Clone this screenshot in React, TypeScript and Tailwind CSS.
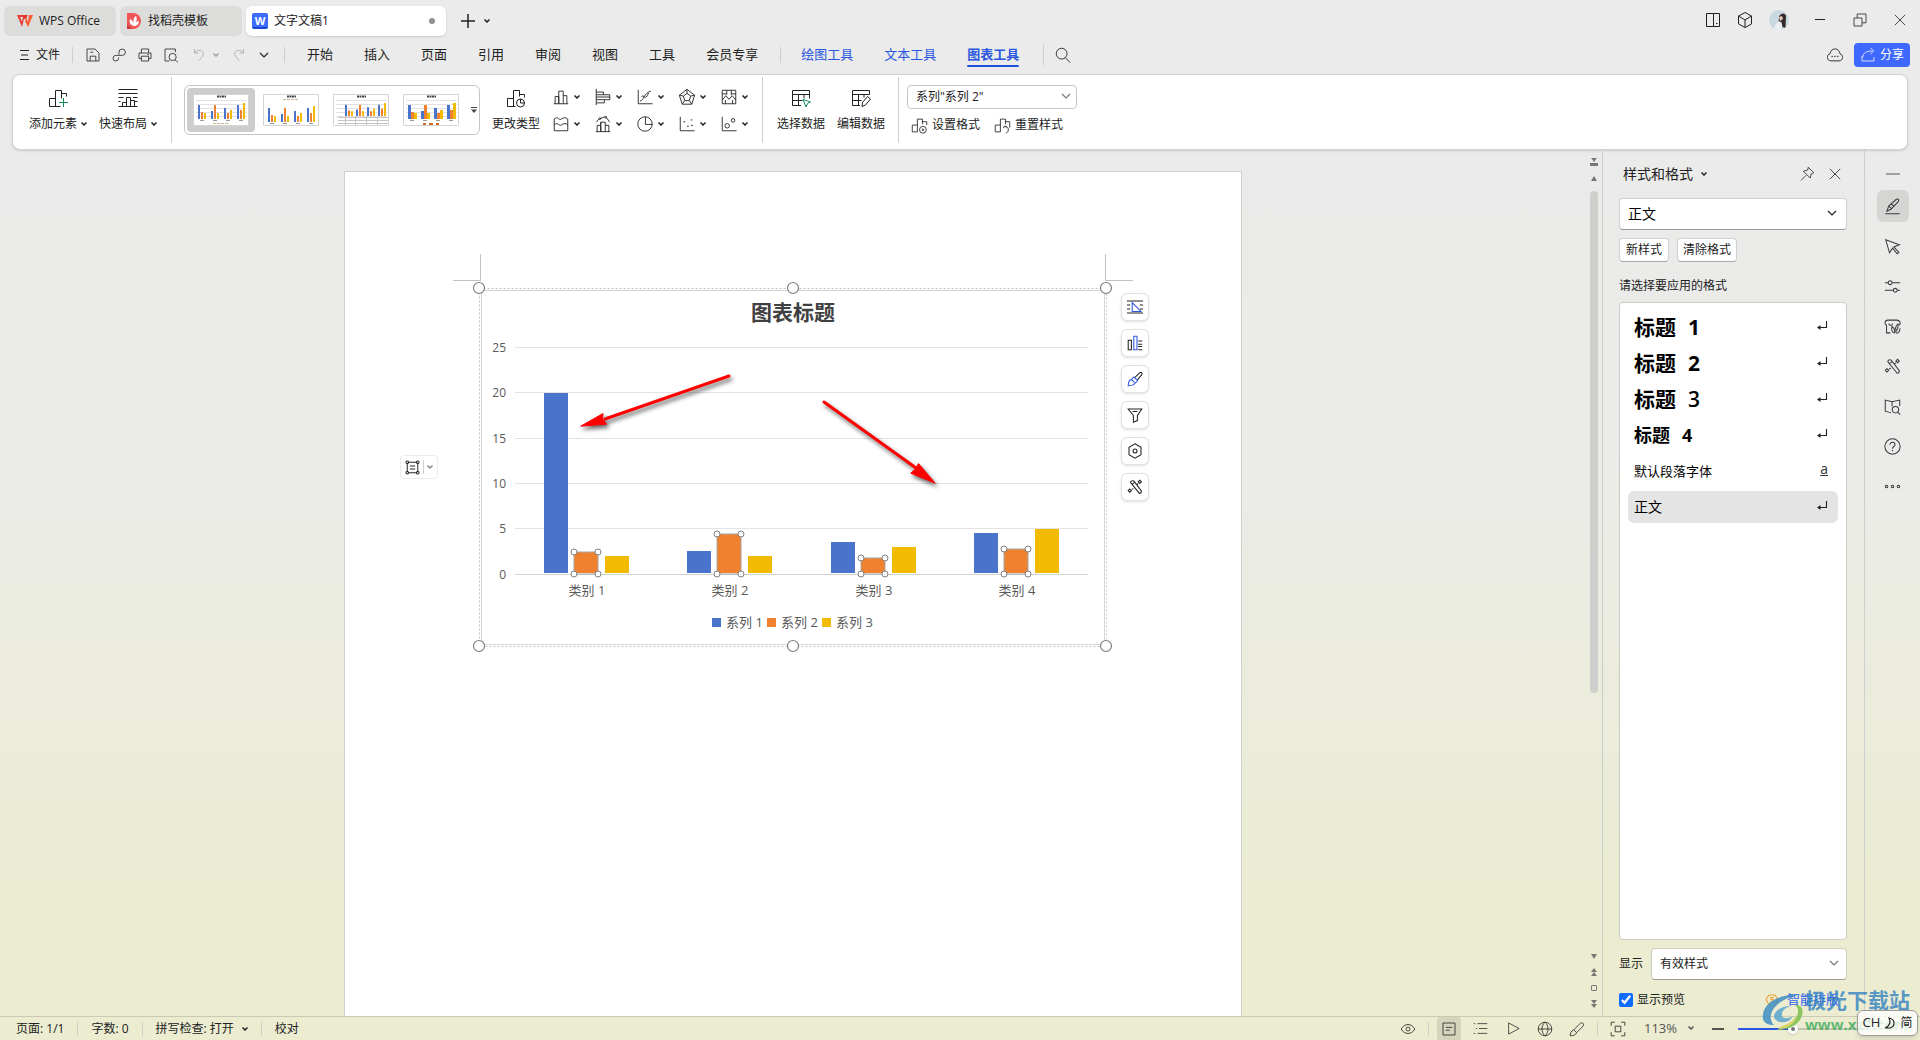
import React, {useState} from "react";

type IconProps = {
 d: string;
 className?: string;
 accent?: string;
 accentClass?: string;
};

// line icon on a 20 x 20 grid, with an optional second colour
const Icon: React.FC<IconProps> = ({d, className = "size-5", accent, accentClass = "stroke-[#2b57e0]"}) => (
 <svg viewBox="0 0 20 20" fill="none" className={`shrink-0 stroke-current ${className}`} aria-hidden="true">
  <path d={d} />
  {accent && <path d={accent} className={accentClass} />}
 </svg>
);

const Caret: React.FC<{className?: string}> = ({className = ""}) => (
 <svg viewBox="0 0 6 4" fill="none" className={`h-1 w-1.5 shrink-0 stroke-current ${className}`} aria-hidden="true">
  <path d="M.5.5 3 3 5.5.5" strokeWidth="1.5" />
 </svg>
);

const Chevron: React.FC<{className?: string}> = ({className = ""}) => (
 <svg viewBox="0 0 10 6" fill="none" className={`h-1.5 w-2.5 shrink-0 stroke-current ${className}`} aria-hidden="true">
  <path d="M1 1l4 4 4-4" strokeWidth="1.2" />
 </svg>
);

const Divider: React.FC<{className?: string}> = ({className = ""}) => (
 <span className={`w-px shrink-0 bg-[#cfcfcd] ${className}`} />
);

const paths = {
 save: "M2.5 17.5v-15h10l5 5v10h-15zM6.5 17.5v-6h7v6M6.5 6.500h4",
 link: "M10 9.500V6.500a4 4 0 1 1 4 4H6a3.500 3.500 0 1 0 3.500 3.500V13",
 print: "M5.5 7.5v-5h9v5M5.5 14.5h-3v-7h15v7h-3M5.5 11.5h9v6h-9zM13 9.5h2",
 preview: "M8 17.5H2.5v-15h13v4M12 8a4.5 4.5 0 1 0 0 9 4.5 4.5 0 1 0 0-9zM15 16l3.500 3",
 undo: "M4.5 2.5v5h5M4.5 7.5C7 4 12 3 14.500 6s0 6-5 11",
 redo: "M15.5 2.5v5h-5M15.5 7.5C13 4 8 3 5.500 6s0 6 5 11",
 search: "M8.5 2.5a6 6 0 1 0 0 12 6 6 0 1 0 0-12zM12.5 13l5.5 5.5",
 addChart: "M1.5 18.5h11M1.5 18.5v-8h6M7.5 18.5v-16h6v8M13.5 5.5h5v3",
 layout: "M.5 1.5h19M.5 5.5h19M.5 9.5h5M15 9.5h4.5M.5 13.5h2M17 13.5h2.5M.5 18.5h19M4.5 18.5v-4h4v4M8.5 18.5v-9h4v9M12.5 12.5h4v6",
 changeType: "M1.5 18.5v-8h6M1.5 18.5h8M7.5 18.5v-16h6v6M13.5 6.5h5v3M14.5 11a4 4 0 1 0 0 8 4 4 0 1 0 0-8zM14.5 11v4h4",
 column: "M2 17.5h16M3.5 17.5v-8h4v8M7.5 17.5v-14h5v14M12.5 8.5h4v9",
 bar: "M2.5 1v18M2.5 4.5h8v3h-8M10.5 7.5h7v2.500h-15M2.5 13h15v-3M2.5 16.5h9v-3",
 line: "M2.5 2v15.5h16M4.5 14.5c4 0 4-9 12-11M6 9.5c3-3 4 6 8-4",
 radar: "M10 1.5l8.5 6.5-3.2 10H4.7L1.5 8zM10 6l4 3-1.5 5h-5L6 9zM10 1.5V6M18.5 8 14 9M15.3 18l-2.8-4M4.7 18l2.8-4M1.5 8 6 9",
 stock: "M2.5 2.5h15v15h-15zM2.5 13.5l4-5 3.5 4 3.5-4 4 5M7.5 2.5v5M12.5 2.5v5M6 17.5v-4M14 17.5v-4M2.5 6.5h5M12.5 6.5h5",
 area: "M2.5 17.5v-13c4-4 5 2 8 0s5-2 7 0v13zM2.5 11c4-4 5 2 8 0s5-2 7 0",
 combo: "M3.5 18.5v-7h4v7M7.5 11v-3h5v10.5M7.5 8v10.5M12.5 11.5h4v7M2 18.5h16M2.5 8l3-3.5M7 4l5-2M14 3l3.5 5M5.5 4a1 1 0 1 0 2 0 1 1 0 1 0-2 0M12 2.5a1 1 0 1 0 2 0 1 1 0 1 0-2 0",
 pie: "M10 2a8 8 0 1 0 0 16 8 8 0 1 0 0-16zM10.5 2v8.5H18",
 scatter: "M2.5 2v15.5h16M6 7.5h2M10 12.5h2M14 5.5h2M14.5 11.5h2",
 bubble: "M2.5 2v15.5h16M8 9.5a2.5 2.5 0 1 0 0 5 2.5 2.5 0 1 0 0-5zM14.5 4a2 2 0 1 0 0 4 2 2 0 1 0 0-4z",
 selectData: "M10 17.5H1.5v-15h17v8M1.5 6.5h17M1.5 12.5h10M7.5 6.5v11M13 6.5v4",
 editData: "M9 17.5H1.5v-15h17v4M1.5 6.5h17M1.5 12.5h9M7.5 6.5v11M13 6.5v3M11 18.5l.5-4 5-6 3 2.5-5 6z",
 formatSet: "M1.5 17.5v-8h6M1.5 17.5h6M7.5 17.5v-15h6v6M13.5 5.5h5v4M14 11a4 4 0 1 0 0 8 4 4 0 1 0 0-8zM14 14a1 1 0 1 0 0 2 1 1 0 1 0 0-2z",
 styleReset: "M1.5 17.5v-8h6M1.5 17.5h6v-15h6v6M13.5 5.5h5v7M11 13l1.5-2.5 2 2M12 11c5-1 7 6 2 8",
 panels: "M3.5 3.5h13v13h-13zM10.5 3.5v13M13 13.5h1.5",
 cube: "M10 2.5l6.5 3.5v8L10 17.5 3.5 14V6zM3.5 6 10 10l6.5-4M10 10v7.5",
 cloud: "M5.500 16.500h9c5 0 5-7 1-8C14.500 1.500 5.500 1.500 4.500 8.500c-4 1-4 8 1 8zM6 11.500h1.800M9.100 11.500h1.800M12.200 11.500H14",
 share: "M2.5 11v6.500h15v-5M3.5 13c0-5 4-8 12-8M13 1l4 4-4 4",
 pin: "M11.5 1.5l7 7-1.5 1-1.500 0-1.500 5.500-8.500-8.500 5.500-1.500zM9 11.500l-6.500 6.500",
 close: "M3.5 3.5l13 13M16.5 3.5l-13 13",
 restore: "M2.5 7.5h10v10h-10zM6.5 7.5v-5h11v11h-5",
 pen: "M1.5 18.5h17M3.5 15.5l2-6 9-8c2-1 4 0 2 3l-8 8.5zM5.5 9.5l3.500 3M8.500 7l3.500 3",
 cursor: "M2 2l16 6-6.500 2.500 6 6.500-2 1.5-5.500-6.500-3.500 5.500z",
 sliders: "M1 5.500h4M9.500 5.500h9.500M7.200 3.200a2.300 2.300 0 1 0 0 4.600 2.300 2.300 0 1 0 0-4.600zM1 14.500h10M15.500 14.500h3.500M13.300 12.200a2.300 2.300 0 1 0 0 4.600 2.300 2.300 0 1 0 0-4.600z",
 gallery: "M7.5 17.5H3v-9C0 7 1 2.5 4.5 2.5H15c4 0 5 4 3 6M5.500 6.500c1 3 4.500 3 4.500 0M9.5 10c-1 4 0 7 2.500 7.500 1-3 0-6-2.500-7.500zM12.500 16c1-5 2-8 4-9 1 3-1 7-3 10M14 18c2.500 0 4.500-2 5-6",
 tools: "M4.500 4.500c0-2 2-3 4-2L18 15c0 2-1 3-2.500 3zM6 7l4-3M16 1.500l2 2-2 2-2-2zM12.500 7l1.500-1.500M3.500 12.500l2 2-2 2-2-2zM6 13l2-1",
 bookSearch: "M8.500 17.500l-7-2v-13l8 2 9-2v7M9.500 4.500v5.500M13.5 10a3.800 3.800 0 1 0 0 7.600 3.800 3.800 0 1 0 0-7.600zM16 16.500l3 3",
 help: "M10 1a9 9 0 1 0 0 18 9 9 0 1 0 0-18zM7 8c0-4 6-4 6 0 0 2-3 2-3 4.500M10 14v1.500",
 dots: "M3 8.500a1.5 1.5 0 1 0 0 3 1.5 1.5 0 1 0 0-3zM10 8.500a1.5 1.5 0 1 0 0 3 1.5 1.5 0 1 0 0-3zM17 8.500a1.5 1.5 0 1 0 0 3 1.5 1.5 0 1 0 0-3z",
 eye: "M1.500 10c4-7.500 13-7.500 17 0-4 7.500-13 7.500-17 0zM10 7.500a2.5 2.5 0 1 0 0 5 2.5 2.5 0 1 0 0-5z",
 pageView: "M2.500 2.500h15v15h-15zM6 8h8M6 11.5h5",
 outline: "M6 3.500h13M8 10h11M6 16.500h13M1 3.500h2M4 10h1.500M1 16.500h2",
 play: "M3.5 2.500l14 7.500-14 7.500z",
 globe: "M10 1.5a8.5 8.5 0 1 0 0 17 8.5 8.5 0 1 0 0-17zM1.5 10h17M10 1.5c-5 4-5 13 0 17M10 1.5c5 4 5 13 0 17",
 brush: "M1.500 18.500c0-3 1-6 4-7l8.500-8.500c2-2 5 0 4 3l-8.500 8.500c-1 3-4 4-8 4zM6 11l3.5 3.5",
 fit: "M1.5 6v-4.500h4.500M14 1.5h4.500V6M18.5 14v4.500H14M6 18.5H1.500V14M6.5 6.5h7v7h-7z",
 funnel: "M1.500 2.500h17l-5.500 8v6.5l-5 2v-8.500zM7 5.5h6",
 hex: "M10 1l7.500 4.500v9L10 19l-7.500-4.500v-9zM10 7.5a2.5 2.5 0 1 0 0 5 2.5 2.5 0 1 0 0-5z",
};

const menuTabs = ["开始", "插入", "页面", "引用", "审阅", "视图", "工具", "会员专享"];
const chartTypes: [string, string][] = [
 ["柱形图", paths.column],
 ["条形图", paths.bar],
 ["折线图", paths.line],
 ["雷达图", paths.radar],
 ["股价图", paths.stock],
 ["面积图", paths.area],
 ["组合图", paths.combo],
 ["饼图", paths.pie],
 ["散点图", paths.scatter],
 ["气泡图", paths.bubble],
];

const TitleBar = () => (
 <header className="flex h-10 items-center">
  <div className="flex flex-1 items-center gap-1 pt-0.5 pl-1 text-xs">
   <button className="flex h-[30px] w-28 items-center gap-1.5 rounded-md bg-[#dcdcdb] pl-[13px]">
    <svg viewBox="0 0 16 12" className="h-3 w-4">
     <path d="M0 0h11L9 4H7L5 12 0 0zm3 2 2 5 1-5z" fill="#e8382f" fillRule="evenodd" />
     <path d="M12 0h4l-5 12-3-6 1.5-3L11 7z" fill="#ff5a2e" />
    </svg>
    WPS Office
   </button>
   <button className="flex h-[30px] w-[122px] items-center gap-1.5 rounded-md bg-[#dcdcdb] pl-1.5">
    <svg viewBox="0 0 16 16" className="size-4">
     <path d="M1 0h6a8 8 0 0 1 0 16H1z" fill="#f25555" />
     <path d="M1 11l5 5H1z" fill="#c93a3a" />
     <path d="M8 13C4 12 3 9 4 6c2 1 3 2 3.5 4C7 7 8 4 10 3c1 2 1 4 0 6l3-1c0 3-2 5-5 5z" fill="#fff" />
    </svg>
    找稻壳模板
   </button>
   <button className="flex h-[30px] w-[200px] items-center gap-1.5 rounded-md bg-white pr-[11px] pl-1.5 shadow-sm">
    <span className="flex size-4 items-center justify-center rounded-xs border-b-2 border-[#1b49d6] bg-[#3c6bff] text-[11px] leading-none font-bold text-white">
     W
    </span>
    <span className="flex-1 text-left">文字文稿1</span>
    <span className="size-1.5 rounded-full bg-[#8f8f8f]" />
   </button>
   <button aria-label="新建" className="ml-2 flex">
    <Icon d="M10 3v14M3 10h14" className="size-5 stroke-[1.5]" />
   </button>
   <button aria-label="标签列表" className="ml-0.5 flex">
    <Caret />
   </button>
  </div>
  <div className="flex items-center pr-3">
   <button aria-label="侧栏" className="mr-3 flex">
    <Icon d={paths.panels} />
   </button>
   <button aria-label="应用" className="mr-3.5 flex">
    <Icon d={paths.cube} />
   </button>
   <svg viewBox="0 0 20 20" className="size-5 rounded-full" role="img" aria-label="头像">
    <path d="M0 0h20v20H0z" fill="#c9d9e0" />
    <path d="M10 7c1-4 6-5 7-1l-.5 12-3-1-1-5-3 1z" fill="#33272c" />
    <path d="M10 7l3-1 1 3-3 2z" fill="#e8c8b8" />
    <path d="M5 20c0-5 3-8 6-9l2 5-1 4z" fill="#e8f0f2" />
   </svg>
   <button aria-label="最小化" className="ml-[21px] flex">
    <Icon d="M5 9.5h10" />
   </button>
   <button aria-label="还原" className="ml-[22px] flex">
    <Icon d={paths.restore} className="size-4" />
   </button>
   <button aria-label="关闭" className="ml-6 flex">
    <Icon d={paths.close} className="size-4" />
   </button>
  </div>
 </header>
);

const MenuBar = () => (
 <nav className="flex h-[34px] items-center pb-1 text-[13px]">
  <button className="flex items-center gap-1.5 pl-5 text-xs">
   <svg viewBox="0 0 10 12" fill="none" className="h-3 w-2.5 stroke-current">
    <path d="M0 1.5h9M1 6h7M0 10.5h9" />
   </svg>
   文件
  </button>
  <Divider className="mr-3 ml-3 h-4" />
  <div className="flex items-center gap-2.5">
   <button aria-label="保存" className="flex"><Icon d={paths.save} className="size-4" /></button>
   <button aria-label="输出" className="flex"><Icon d={paths.link} className="size-4" /></button>
   <button aria-label="打印" className="flex"><Icon d={paths.print} className="size-4" /></button>
   <button aria-label="打印预览" className="flex"><Icon d={paths.preview} className="size-4" /></button>
   <button aria-label="撤销" className="ml-0.5 flex items-center gap-1.5 text-[#a5a5a5]">
    <Icon d={paths.undo} className="size-4" />
    <Caret />
   </button>
   <button aria-label="恢复" className="ml-0.5 flex text-[#a5a5a5]"><Icon d={paths.redo} className="size-4" /></button>
   <button aria-label="更多" className="ml-0.5 flex"><Chevron /></button>
  </div>
  <Divider className="mr-[22px] ml-[15px] h-4" />
  <div className="flex items-center gap-[31px]">
   {menuTabs.map((t) => (
    <button key={t}>{t}</button>
   ))}
  </div>
  <Divider className="mr-5 ml-[22px] h-4" />
  <div className="flex items-center gap-[31px] text-[#2b57e0]">
   <button>绘图工具</button>
   <button>文本工具</button>
   <button className="relative font-bold">
    图表工具
    <span className="absolute inset-x-0 -bottom-0.5 h-0.5 rounded bg-[#1e50e0]" />
   </button>
  </div>
  <Divider className="mr-2.5 ml-6 h-5" />
  <button aria-label="搜索" className="flex">
   <Icon d={paths.search} className="size-[18px]" />
  </button>
  <div className="ml-auto flex items-center gap-2.5 pr-2.5 text-xs">
   <button aria-label="云同步" className="flex"><Icon d={paths.cloud} className="size-[18px]" /></button>
   <button className="flex h-6 w-14 items-center justify-center gap-1 rounded bg-[#3f68ff] text-white">
    <Icon d={paths.share} className="size-4" />
    分享
   </button>
  </div>
 </nav>
);

const BigButton: React.FC<{label: string; d: string; accent?: string; caret?: boolean; wide?: boolean}> = ({label, d, accent, caret, wide}) => (
 <button className={`flex flex-col items-center gap-2 leading-4 ${wide ? "w-[70px]" : "w-[60px]"}`}>
  <Icon d={d} accent={accent} accentClass="stroke-[#128a55]" />
  <span className="flex items-center gap-1 whitespace-nowrap">
   {label}
   {caret && <Caret />}
  </span>
 </button>
);

const thumbBars = [
 [14, 7, 6],
 [8, 14, 6],
 [11, 6, 9],
 [14, 9, 16],
];
const thumbColors = ["#4a74cb", "#ef812f", "#f2ba02"];

const Thumb: React.FC<{kind: number}> = ({kind}) => {
 const base = kind === 1 ? 28 : kind === 2 ? 22 : 25;
 const left = kind === 2 ? 12 : 5;
 const pitch = kind === 2 ? 11 : 13;
 return (
  <svg viewBox="0 0 56 32" className="h-8 w-14" aria-hidden="true">
   <path d="M.5.5h55v31H.5z" fill="#fff" stroke="#d4d4d4" />
   <path d="M24 2.5h9" stroke="#444" strokeWidth="2" strokeDasharray="2 .5" />
   {kind !== 1 && <path d="M3 6.5h51M3 10.5h51M3 14.5h51M3 18.5h51M3 22.5h51" stroke="#e2e2e2" />}
   {kind === 1 && <path d="M20 5.5h16" stroke="#c9b98a" strokeDasharray="3 1" />}
   {kind === 2 && <path d="M5 23.5h50M5 26.5h50M5 29.5h50M12.5 22v9M22.5 22v9M33.5 22v9M44.5 22v9" stroke="#c4c4c4" />}
   {thumbBars.map((group, g) =>
    group.map((v, s) => (
     <rect
      key={`${g}-${s}`}
      x={left + g * pitch + s * 3}
      y={base - v * (kind === 2 ? 0.8 : 1)}
      width={kind === 3 ? 3 : 2}
      height={v * (kind === 2 ? 0.8 : 1)}
      fill={thumbColors[s]}
     />
    ))
   )}
   {kind !== 2 && <path d={`M4 ${base + 1}.5h48`} stroke="#999" strokeDasharray="4 9" strokeDashoffset="-3" />}
   {kind === 0 && <path d="M20 29.5h16" stroke="#c9b98a" strokeDasharray="3 1" />}
   {kind === 3 && <path d="M20 30h3M26 30h4M33 30h3" stroke="#d06a20" strokeWidth="2" />}
  </svg>
 );
};

const Ribbon = () => {
 const [thumb, setThumb] = useState(0);
 return (
  <section className="mx-3 flex h-[76px] items-center rounded-lg border border-[#d2d2d1] bg-white pb-1 text-xs shadow-sm">
   <div className="flex pl-2.5">
    <BigButton label="添加元素" d={paths.addChart} accent="M15.5 10v9M11 14.5h9" caret wide />
    <BigButton label="快速布局" d={paths.layout} caret wide />
   </div>
   <Divider className="mr-3 ml-2 h-[66px]" />
   <div className="flex items-center gap-0.5 rounded-md border border-[#c6c6c6] p-0.5">
    {[0, 1, 2, 3].map((k) => (
     <button
      key={k}
      aria-label={`图表样式 ${k + 1}`}
      onClick={() => setThumb(k)}
      className={`flex h-11 w-[68px] items-center justify-center rounded ${thumb === k ? "bg-[#cdcdcd]" : ""}`}
     >
      <Thumb kind={k} />
     </button>
    ))}
    <button aria-label="更多样式" className="flex w-2.5 justify-end">
     <svg viewBox="0 0 6 6" className="size-1.5 fill-[#444]">
      <path d="M0 0h6v1H0zM0 2.5h6L3 6z" />
     </svg>
    </button>
   </div>
   <div className="ml-1.5 flex">
    <BigButton label="更改类型" d={paths.changeType} />
   </div>
   <div className="ml-1.5 grid w-[210px] grid-cols-5">
    {chartTypes.map(([name, d]) => (
     <button key={name} aria-label={name} className="flex h-[27px] items-center gap-1">
      <Icon d={d} className="size-[18px]" />
      <Caret />
     </button>
    ))}
   </div>
   <Divider className="mr-2 h-[66px]" />
   <BigButton label="选择数据" d={paths.selectData} accent="M12 11.5l7.5 2.5-3 1.5-1.5 3.5z" />
   <BigButton label="编辑数据" d={paths.editData} />
   <Divider className="mr-2 ml-[7px] h-[66px]" />
   <div className="flex flex-col gap-2 pb-0.5">
    <div className="relative flex h-6 w-[170px]">
     <select aria-label="图表元素" className="w-full appearance-none rounded border border-[#c6c6c6] bg-white pl-2 leading-4">
      <option>系列"系列 2"</option>
      <option>系列"系列 1"</option>
      <option>系列"系列 3"</option>
     </select>
     <Chevron className="pointer-events-none absolute top-2 right-1.5 text-[#777]" />
    </div>
    <div className="flex gap-3.5 pl-1 leading-4">
     <button className="flex items-center gap-1">
      <Icon d={paths.formatSet} className="size-[17px]" />
      设置格式
     </button>
     <button className="flex items-center gap-1">
      <Icon d={paths.styleReset} className="size-[17px]" />
      重置样式
     </button>
    </div>
   </div>
  </section>
 );
};

const categories = [
 {name: "类别 1", values: [20, 2.4, 2]},
 {name: "类别 2", values: [2.5, 4.4, 2]},
 {name: "类别 3", values: [3.5, 1.8, 3]},
 {name: "类别 4", values: [4.5, 2.8, 5]},
];
const legend = ["系列 1", "系列 2", "系列 3"];
const ticks = [0, 5, 10, 15, 20, 25];
const barX = [72, 102, 133];

const DocChart = () => {
 const floor = 293;
 const unit = 9.06;
 return (
  <svg viewBox="0 0 641 372" className="h-[372px] w-[641px] overflow-visible fill-[#595959] text-[13px]" role="img" aria-label="图表标题">
   <path d="M9.5 9.5h623v354h-623z" fill="none" stroke="#d5d5d5" />
   <path d="M7.5 7.5h627v358h-627z" fill="none" stroke="#c2c2c2" strokeDasharray="2 2" />
   <text x="321" y="39" textAnchor="middle" className="fill-[#404040] text-[21px] font-bold">
    图表标题
   </text>
   {ticks.map((t) => {
    const y = Math.floor(floor - t * unit) + 0.5;
    return (
     <g key={t}>
      <path d={`M43 ${y}h573`} stroke={t ? "#e3e3e3" : "#d3d3d3"} />
      <text x="34" y={y + 4.5} textAnchor="end" className="text-xs">
       {t}
      </text>
     </g>
    );
   })}
   {categories.map((c, i) => {
    const shift = Math.round(i * 143.4);
    return (
     <g key={c.name}>
      {c.values.map((v, s) => {
       const h = Math.round(v * unit) - 1;
       return <rect key={s} x={barX[s] + shift} y={292 - h} width="24" height={h} fill={thumbColors[s]} />;
      })}
      <text x={115 + shift} y="314" textAnchor="middle">
       {c.name}
      </text>
     </g>
    );
   })}
   {/* handles of the selected series */}
   {categories.map((c, i) => {
    const x = 102 + Math.round(i * 143.4);
    const top = 293 - Math.round(c.values[1] * unit);
    return (
     <g key={c.name} fill="#fff" stroke="#808080">
      <path d={`M${x} ${top}h24V293h-24z`} fill="none" stroke="#a6a6a6" />
      {[x, x + 24].map((cx) => [top, 293].map((cy) => <circle key={`${cx}-${cy}`} cx={cx} cy={cy} r="3" />))}
     </g>
    );
   })}
   {legend.map((name, i) => (
    <g key={name}>
     <rect x={240 + i * 55} y="337" width="9" height="9" fill={thumbColors[i]} />
     <text x={254 + i * 55} y="346">
      {name}
     </text>
    </g>
   ))}
   {[7, 321, 634].map((x) =>
    [7, 365].map((y) => <circle key={`${x}-${y}`} cx={x} cy={y} r="5.5" fill="#fff" stroke="#7f7f7f" strokeWidth="1.2" />)
   )}
   <g fill="#fe0000" stroke="#fe0000" strokeLinecap="round" className="drop-shadow-[2px_3px_2px_rgba(0,0,0,0.6)]">
    <path d="M257 95 133 138" strokeWidth="3" />
    <path d="M109 145l22-12.5-.5 5.5 4 5z" strokeWidth="1" />
    <path d="M352 121l92 66" strokeWidth="3" />
    <path d="M463 202l-16.500-19.500-3 5.500-4.500 4z" strokeWidth="1" />
   </g>
  </svg>
 );
};

const chartTools: {name: string; d: string; accent?: string}[] = [
 {name: "布局选项", d: "M0 2.5h20M0 7.5h4M16 7.5h4M0 12.5h4M16 12.5h4M0 17.5h20", accent: "M6.5 4.5v11h11z"},
 {name: "图表元素", d: "M1.5 6.5h4v12h-4zM14 7.5h5M14 11.5h5M14 14.5h5M14 18.5h5", accent: "M8.5 1.5h4v17h-4z"},
 {name: "图表样式", d: "M10 8l6-6c2-1 3.500 1 2.500 2.500L13 11", accent: "M1.5 18.5c0-4 1-7 4-8l3-3 5 4.5-3 3c-2 3-5 3.500-9 3.500zM5.5 10.5l4 4"},
 {name: "图表筛选器", d: paths.funnel},
 {name: "设置图表区域格式", d: paths.hex},
 {name: "快捷工具", d: paths.tools},
];

const Page = () => (
 <article className="relative w-[898px] shrink-0 border border-b-0 border-[#cfcfcb] bg-white px-[108px] pt-[82px]">
  <div className="flex justify-between">
   <span className="h-[27px] w-7 border-r border-b border-[#c2c2c2]" />
   <span className="h-[27px] w-7 border-b border-l border-[#c2c2c2]" />
  </div>
  <div className="pl-[19px]">
   <DocChart />
  </div>
  <div className="absolute top-[121px] left-[776px] flex flex-col gap-2">
   {chartTools.map((t) => (
    <button key={t.name} aria-label={t.name} className="flex size-7 items-center justify-center rounded-md border border-[#e2e2e2] bg-white shadow">
     <Icon d={t.d} accent={t.accent} className="size-4 stroke-[1.3]" />
    </button>
   ))}
  </div>
  <button aria-label="段落布局" className="absolute top-[283px] left-[55px] flex h-6 w-[38px] items-center justify-between rounded border border-[#ececec] bg-white px-1">
   <Icon d="M4 3h12M4 17h12M3 4v12M17 4v12M6.5 8h7M6.5 12h7M1.5 1.5h3v3h-3zM15.5 1.5h3v3h-3zM1.5 15.5h3v3h-3zM15.5 15.5h3v3h-3z" className="size-[15px] stroke-[1.3]" />
   <Divider className="h-3.5" />
   <Caret className="text-[#888]" />
  </button>
 </article>
);

const ScrollRail = () => (
 <div className="flex w-4 shrink-0 flex-col items-center pt-2 pb-2 text-[#777]">
  <svg viewBox="0 0 8 8" className="size-2 fill-current"><path d="M1 0h6L4.5 3v1h-1V3zM0 5h8v3H0z" /></svg>
  <svg viewBox="0 0 6 5" className="mt-2.5 h-[5px] w-1.5 fill-current"><path d="M3 0l3 5H0z" /></svg>
  <span className="mt-2.5 h-[59%] w-2 rounded bg-[#cfcfce]" />
  <div className="mt-auto flex flex-col items-center gap-[9px]">
   <svg viewBox="0 0 6 5" className="h-[5px] w-1.5 fill-current"><path d="M3 5l3-5H0z" /></svg>
   <svg viewBox="0 0 6 8" className="h-2 w-1.5 fill-current"><path d="M3 0l3 4H0zM3 4l3 4H0z" /></svg>
   <span className="size-1.5 rounded-[1px] border border-current" />
   <svg viewBox="0 0 6 8" className="h-2 w-1.5 fill-current"><path d="M3 4l3-4H0zM3 8l3-4H0z" /></svg>
  </div>
 </div>
);

const styleRows = [
 {name: "标题", no: "1", cls: "text-[21px] font-bold"},
 {name: "标题", no: "2", cls: "text-[21px] font-bold"},
 {name: "标题", no: "3", cls: "text-[21px] font-semibold"},
 {name: "标题", no: "4", cls: "text-[18px] font-bold"},
 {name: "默认段落字体", no: "", cls: "text-[13px]"},
 {name: "正文", no: "", cls: "text-sm"},
];

const StylePane = () => {
 const [active, setActive] = useState(5);
 const [showPreview, setShowPreview] = useState(true);
 return (
  <aside className="flex w-[262px] shrink-0 flex-col border-l border-[#cdcdcb] pr-[17px] pl-4 text-xs text-[#222]">
   <div className="flex h-12 items-center pl-1">
    <button className="flex flex-1 items-center gap-2 text-sm">
     样式和格式
     <Caret />
    </button>
    <button aria-label="固定" className="mr-3 flex"><Icon d={paths.pin} className="size-4" /></button>
    <button aria-label="关闭窗格" className="mr-1 flex"><Icon d={paths.close} className="size-4" /></button>
   </div>
   <div className="relative flex h-8">
    <select aria-label="当前样式" className="w-full appearance-none rounded border border-[#cfcfcf] border-b-[#9b9b9b] bg-white pl-2 text-sm text-black">
     <option>正文</option>
    </select>
    <Chevron className="pointer-events-none absolute top-3 right-2.5" />
   </div>
   <div className="mt-2 flex gap-2">
    <button className="h-6 w-[50px] rounded border border-[#d0d0d0] border-b-[#a8a8a8] bg-white">新样式</button>
    <button className="h-6 w-[60px] rounded border border-[#d0d0d0] border-b-[#a8a8a8] bg-white">清除格式</button>
   </div>
   <p className="mt-4 leading-4">请选择要应用的格式</p>
   <ul className="mt-2 flex flex-1 flex-col gap-1 rounded border border-[#cdcdc6] bg-white px-2 py-2 text-black">
    {styleRows.map((r, i) => (
     <li key={i}>
      <button
       onClick={() => setActive(i)}
       className={`flex h-8 w-full items-center gap-3 rounded-md pr-2.5 pl-1.5 ${active === i ? "bg-[#e4e4e4]" : ""}`}
      >
       <span className={`flex gap-3 leading-none ${r.cls}`}>
        <span>{r.name}</span>
        {r.no && <span>{r.no}</span>}
       </span>
       {i === 4 ? (
        <span className="mb-1 ml-auto text-sm leading-none text-[#333] underline">a</span>
       ) : (
        <svg viewBox="0 0 12 12" fill="none" className="mb-0.5 ml-auto size-3 stroke-[#222]">
         <path d="M10.5 1v6.500H3" strokeWidth="1.1" />
         <path d="M4.5 5v5L1 7.500z" fill="#222" stroke="none" />
        </svg>
       )}
      </button>
     </li>
    ))}
   </ul>
   <div className="mt-2 flex items-center justify-between">
    <label htmlFor="display">显示</label>
    <div className="relative flex h-8 w-[196px]">
     <select id="display" className="w-full appearance-none rounded border border-[#cfcfc0] border-b-[#9b9b90] bg-white pl-2">
      <option>有效样式</option>
     </select>
     <Chevron className="pointer-events-none absolute top-3 right-2 text-[#777]" />
    </div>
   </div>
   <div className="mt-3 mb-2 flex h-4 items-center">
    <label className="flex items-center gap-1">
     <input
      type="checkbox"
      checked={showPreview}
      onChange={(e) => setShowPreview(e.target.checked)}
      className="size-3.5 accent-[#0d6bff]"
     />
     显示预览
    </label>
    <button className="mr-2 ml-auto flex items-center gap-2 text-[13px] text-[#2f62f0]">
     <svg viewBox="0 0 14 12" fill="none" className="h-3 w-3.5 stroke-[#eda43a]">
      <path d="M4 1h6l3 4.5L10 11H4L1 5.5zM9 3.5H6v2.2h2.5V8H5" strokeWidth="1.2" />
     </svg>
     智能排版
    </button>
   </div>
  </aside>
 );
};

const railItems: [string, string][] = [
 ["样式和格式", paths.pen],
 ["选择", paths.cursor],
 ["属性", paths.sliders],
 ["素材", paths.gallery],
 ["工具", paths.tools],
 ["查找", paths.bookSearch],
 ["帮助", paths.help],
 ["更多", paths.dots],
];

const ToolRail = () => (
 <div className="flex w-14 shrink-0 flex-col items-center gap-2 border-l border-[#cdcdcb] text-[#3a3a3a]">
  <button aria-label="收起" className="flex h-8 items-end">
   <svg viewBox="0 0 14 16" className="h-4 w-3.5 stroke-[#888]"><path d="M0 8h14" strokeWidth="1.5" /></svg>
  </button>
  {railItems.map(([name, d], i) => (
   <button key={name} aria-label={name} className={`flex size-8 items-center justify-center rounded-md ${i === 0 ? "bg-[#d5d5d4]" : ""}`}>
    <Icon d={d} className="size-[17px] stroke-[1.2]" />
   </button>
  ))}
 </div>
);

const StatusBar = () => {
 const [zoom, setZoom] = useState(113);
 return (
  <footer className="flex h-6 shrink-0 items-center border-t border-[#c9cab2] text-xs">
   <span className="pl-4">页面: 1/1</span>
   <Divider className="mx-[13px] h-3.5" />
   <span>字数: 0</span>
   <Divider className="mx-[13px] h-3.5" />
   <button className="flex items-center gap-2">
    拼写检查: 打开
    <Caret />
   </button>
   <Divider className="mx-[13px] h-3.5" />
   <button>校对</button>
   <div className="ml-auto flex items-center">
    <button aria-label="护眼模式" className="flex"><Icon d={paths.eye} className="size-4" /></button>
    <Divider className="mr-2 ml-3 h-3.5" />
    <button aria-label="页面视图" className="flex h-6 w-6 items-center justify-center rounded bg-[#d4d5bd]">
     <Icon d={paths.pageView} className="size-4" />
    </button>
    <button aria-label="大纲" className="ml-3 flex"><Icon d={paths.outline} className="size-[15px]" /></button>
    <button aria-label="阅读版式" className="ml-[18px] flex"><Icon d={paths.play} className="size-[15px]" /></button>
    <button aria-label="Web 版式" className="ml-4 flex"><Icon d={paths.globe} className="size-4" /></button>
    <button aria-label="写作模式" className="ml-4 flex"><Icon d={paths.brush} className="size-4" /></button>
    <Divider className="mx-3 h-3.5" />
    <button aria-label="最佳显示比例" className="flex"><Icon d={paths.fit} className="size-4" /></button>
    <button className="ml-[18px] flex items-center gap-2.5 text-[#555]">
     <span className="w-[34px] text-left text-[13px]">{zoom}%</span>
     <Caret />
    </button>
    <button aria-label="缩小" className="ml-[18px] flex">
     <svg viewBox="0 0 12 4" className="h-1 w-3 stroke-[#222]"><path d="M0 2h12" strokeWidth="1.5" /></svg>
    </button>
    <input
     type="range"
     aria-label="显示比例"
     min="10"
     max="280"
     value={zoom}
     onChange={(e) => setZoom(Number(e.target.value))}
     className="mr-[42px] ml-3.5 h-0.5 w-[140px] appearance-none bg-[linear-gradient(to_right,#2b57e0_38%,#c3c4b4_38%)] [&::-webkit-slider-thumb]:size-2.5 [&::-webkit-slider-thumb]:appearance-none [&::-webkit-slider-thumb]:rounded-full [&::-webkit-slider-thumb]:border-[3px] [&::-webkit-slider-thumb]:border-white [&::-webkit-slider-thumb]:bg-[#777] [&::-webkit-slider-thumb]:shadow"
    />
   </div>
  </footer>
 );
};

// site stamp and input-method badge, floating over the corner of the window
const CornerOverlay = () => (
 <>
  <div className="pointer-events-none absolute right-2.5 bottom-1 flex items-center gap-px leading-6 font-bold whitespace-nowrap">
   <svg viewBox="0 0 42 38" className="h-[38px] w-[42px] opacity-85">
    <path d="M1 26C-1 12 14 1 40 1 24 4 12 11 9 21c-1 4 0 8 3 11-6 0-10-2-11-6z" fill="#3f8fc4" />
    <path d="M12 23c1-6 8-10 17-10-7 2-10 6-9 10 1 3 7 3 11 0-3 5-7 7-12 6-4 0-7-3-7-6z" fill="#5aa5cf" />
    <path d="M33 12c8 0 9 6 6 13-4 8-13 12-24 12 9-2 16-6 19-12 3-5 3-10-1-13z" fill="#7bbf4a" />
    <path d="M20 33c7-2 12-6 14-11 0 7-6 13-19 15z" fill="#d8d25a" />
   </svg>
   <div className="flex flex-col">
    <span className="text-[21px] text-[#2f7fc0]/80">极光下载站</span>
    <span className="text-[15px] text-[#3dab5a]/80">www.xz7.com</span>
   </div>
  </div>
  <div className="absolute right-0.5 bottom-1 flex h-[26px] w-[61px] items-center justify-center gap-1 rounded-md border border-[#9a9a9a] bg-white/80 text-xs text-[#222] shadow-md">
   <span className="text-[13px]">CH</span>
   <svg viewBox="0 0 12 12" fill="none" className="size-3 stroke-[#222]">
    <path d="M5 1c6 1 7 8 1 10H1c5-2 6-6 4-10z" strokeWidth="1.2" />
   </svg>
   简
  </div>
 </>
);

export default function App() {
 return (
  <div className="relative flex h-screen min-h-[700px] flex-col overflow-hidden bg-[linear-gradient(to_bottom,#eaebea_0%,#ebebe9_45%,#ebecd9_72%,#ebecd0_90%)] font-['Open_Sans','Noto_Sans_CJK_SC',sans-serif] text-[#222]">
   <TitleBar />
   <MenuBar />
   <Ribbon />
   <div className="flex min-h-0 flex-1">
    <main className="flex flex-1 justify-center overflow-hidden pt-[21px]">
     <Page />
    </main>
    <ScrollRail />
    <StylePane />
    <ToolRail />
   </div>
   <StatusBar />
   <CornerOverlay />
  </div>
 );
}
